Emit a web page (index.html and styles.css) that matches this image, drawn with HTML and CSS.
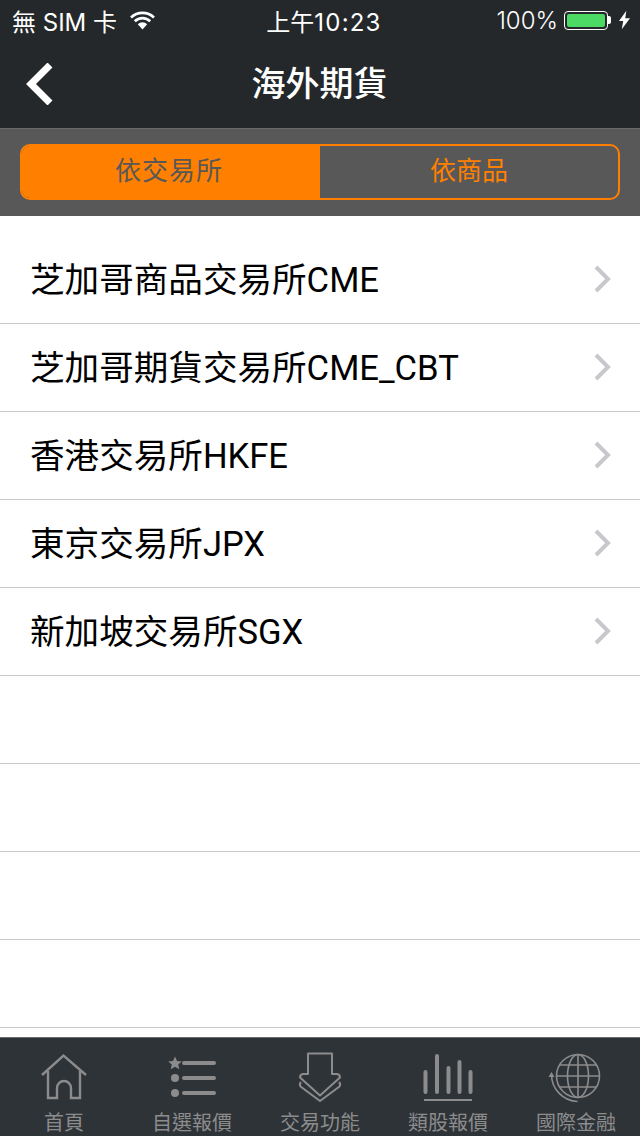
FILE: index.html
```html
<!DOCTYPE html>
<html lang="zh-Hant">
<head>
    <meta charset="UTF-8">
    <title>海外期貨</title>
    <link rel="stylesheet" href="styles.css">
</head>
<body>
<div class="app">
    <div class="statusbar">
        <div class="status-left">
            <span>無 SIM 卡</span>
            <svg class="wifi" width="25" height="19" viewBox="0 0 25 19">
                <path d="M1 6.500a16.500 16.500 0 0 1 23 0" fill="none" stroke="#fff" stroke-width="2.600"/>
                <path d="M4.800 10.300a11 11 0 0 1 15.400 0" fill="none" stroke="#fff" stroke-width="2.600"/>
                <path d="M7.800 13.300a6.700 6.700 0 0 1 9.400 0L12.500 18.500z" fill="#fff"/>
            </svg>
        </div>
        <div class="status-time">上午<span class="digits">10:23</span></div>
        <div class="status-right">
            <span class="percent">100%</span>
            <div class="battery"><div class="battery-fill"></div></div>
            <div class="battery-tip"></div>
            <svg width="11" height="20" viewBox="0 0 12 20"><path d="M8 0 0 11h4.600L3 20l9-12H6.800z" fill="#fff"/></svg>
        </div>
    </div>

    <div class="navbar">
        <svg class="back" width="28" height="42" viewBox="0 0 28 42">
            <path d="M24 2 5 21l19 19" fill="none" stroke="#fff" stroke-width="7"/>
        </svg>
        <div class="nav-title">海外期貨</div>
    </div>

    <div class="segment-bar">
        <div class="segment">
            <div class="segment-item active">依交易所</div>
            <div class="segment-item">依商品</div>
        </div>
    </div>

    <div class="list">
        <div class="row"><span>芝加哥商品交易所CME</span><svg class="chevron" width="18" height="28" viewBox="0 0 18 28"><path d="M2 2l12 12L2 26" fill="none" stroke="#c7c7cc" stroke-width="4"/></svg></div>
        <div class="row"><span>芝加哥期貨交易所CME_CBT</span><svg class="chevron" width="18" height="28" viewBox="0 0 18 28"><path d="M2 2l12 12L2 26" fill="none" stroke="#c7c7cc" stroke-width="4"/></svg></div>
        <div class="row"><span>香港交易所HKFE</span><svg class="chevron" width="18" height="28" viewBox="0 0 18 28"><path d="M2 2l12 12L2 26" fill="none" stroke="#c7c7cc" stroke-width="4"/></svg></div>
        <div class="row"><span>東京交易所JPX</span><svg class="chevron" width="18" height="28" viewBox="0 0 18 28"><path d="M2 2l12 12L2 26" fill="none" stroke="#c7c7cc" stroke-width="4"/></svg></div>
        <div class="row"><span>新加坡交易所SGX</span><svg class="chevron" width="18" height="28" viewBox="0 0 18 28"><path d="M2 2l12 12L2 26" fill="none" stroke="#c7c7cc" stroke-width="4"/></svg></div>
        <div class="row"></div>
        <div class="row"></div>
        <div class="row"></div>
        <div class="row"></div>
    </div>

    <div class="tabbar">
        <div class="tab">
            <svg class="tab-icon" viewBox="32 1050 64 52" fill="none" stroke="#8c8c8c" stroke-width="2.400">
                <path d="M42 1074l21.500-19.500L86 1074"/>
                <path d="M48 1070v27h9v-10a7 7 0 0 1 14 0v10h9v-27"/>
            </svg>
            <span>首頁</span>
        </div>
        <div class="tab">
            <svg class="tab-icon" viewBox="160 1050 64 52" fill="#8c8c8c">
                <path d="M175 1055.500l2 4.500 4.800.4-3.600 3.100 1.100 4.700-4.300-2.500-4.300 2.500 1.100-4.700-3.600-3.100 4.800-.4z"/>
                <circle cx="175" cy="1077" r="4"/>
                <circle cx="175" cy="1092" r="4"/>
                <path d="M184 1062h30M184 1077h30M184 1092h30" stroke="#8c8c8c" stroke-width="4" stroke-linecap="round"/>
            </svg>
            <span>自選報價</span>
        </div>
        <div class="tab">
            <svg class="tab-icon" viewBox="288 1050 64 52" fill="none" stroke="#8c8c8c" stroke-width="2" stroke-linejoin="round">
                <path d="M308 1073v-20.500h24v20.500h5q3 .5 3 3.500l-20 18-20-18q0-3 3-3.500z"/>
                <path d="M301 1081q-2 2-.5 4.500L320 1100l19.500-14.500q1.500-2.500-.5-4.500"/>
            </svg>
            <span>交易功能</span>
        </div>
        <div class="tab">
            <svg class="tab-icon" viewBox="416 1050 64 52" fill="none" stroke="#8c8c8c">
                <path d="M425.500 1071v20M437 1055v36M448.500 1067v24M459.500 1061v30M470.500 1071v20" stroke-width="4" stroke-linecap="round"/>
                <path d="M424 1099h48" stroke-width="2"/>
            </svg>
            <span>類股報價</span>
        </div>
        <div class="tab">
            <svg class="tab-icon" viewBox="544 1050 64 52" fill="none" stroke="#8c8c8c" stroke-width="1.600">
                <circle cx="578" cy="1075" r="21.500"/>
                <ellipse cx="578" cy="1075" rx="10.500" ry="21.500"/>
                <path d="M578 1053.500v43M556.500 1075h43M559.500 1064h37M559.500 1086h37"/>
                <path d="M551.500 1074a27 27 0 0 0 26 26.500"/>
                <path d="M551.500 1071l-3 5h6z" fill="#8c8c8c" stroke="none"/>
            </svg>
            <span>國際金融</span>
        </div>
    </div>
</div>
</body>
</html>
```

FILE: styles.css
```css
* {
    box-sizing: border-box;
}

body {
    margin: 0;
    font-family: Roboto, "Noto Sans CJK TC", sans-serif;
}

.app {
    display: flex;
    flex-direction: column;
    width: 640px;
    height: 1136px;
    overflow: hidden;
    background-color: #fff;
}

.statusbar {
    display: grid;
    grid-template-columns: 1fr auto 1fr;
    align-items: center;
    height: 40px;
    padding: 0 10px 0 12px;
    background-color: #24282a;
    color: #fff;
    font-family: "Inter", "Noto Sans CJK TC", sans-serif;
    font-size: 24px;
}

.status-left {
    display: flex;
    align-items: center;
    gap: 13px;
}

.status-time {
    margin-left: 6px;
}

.digits {
    letter-spacing: 1.200px;
}

.status-right {
    display: flex;
    align-items: center;
    justify-content: flex-end;
}

.percent {
    font-weight: 300;
}

.battery {
    width: 44px;
    height: 19px;
    margin-left: 6px;
    padding: 2px;
    border: 1px solid #fff;
    border-radius: 4px;
}

.battery-fill {
    height: 100%;
    border-radius: 2px;
    background-color: #4cd964;
}

.battery-tip {
    width: 3px;
    height: 8px;
    margin-right: 8px;
    border-radius: 0 2px 2px 0;
    background-color: #fff;
}

.navbar {
    display: flex;
    align-items: center;
    justify-content: center;
    position: relative;
    height: 89px;
    background-color: #24282a;
    border-bottom: 1px solid #6b6b6b;
}

.back {
    position: absolute;
    left: 26px;
    top: 23px;
}

.nav-title {
    color: #fff;
    font-size: 34px;
    font-weight: 500;
    margin-top: -5px;
    margin-right: 1px;
}

.segment-bar {
    height: 87px;
    padding: 15px 20px 16px;
    background-color: #585858;
}

.segment {
    display: grid;
    grid-template-columns: 1fr 1fr;
    height: 56px;
    border: 2px solid #ff8000;
    border-radius: 10px;
    overflow: hidden;
}

.segment-item {
    text-align: center;
    line-height: 51px;
    font-size: 26px;
    color: #ff8000;
}

.segment-item.active {
    padding-right: 4px;
    background-color: #ff8000;
    color: #585858;
    letter-spacing: 1px;
}

.list {
    flex: 1;
    padding-top: 20px;
    overflow: hidden;
}

.row {
    display: flex;
    align-items: center;
    justify-content: space-between;
    height: 88px;
    padding: 0 28px 0 30px;
    border-bottom: 1px solid #c8c8c8;
    color: #000;
    font-size: 34.600px;
}

.row span {
    margin-bottom: 6px;
}

.chevron {
    margin-bottom: 2px;
}

.tabbar {
    display: grid;
    grid-template-columns: repeat(5, 1fr);
    height: 99px;
    padding-top: 13px;
    background-color: #2e3338;
    border-top: 1px solid #6b6b6b;
}

.tab {
    display: flex;
    flex-direction: column;
    align-items: center;
    color: #8c8c8c;
    font-size: 20px;
    line-height: 28px;
}

.tab-icon {
    display: block;
    flex-shrink: 0;
    width: 64px;
    height: 52px;
    margin-bottom: 6px;
}
```
